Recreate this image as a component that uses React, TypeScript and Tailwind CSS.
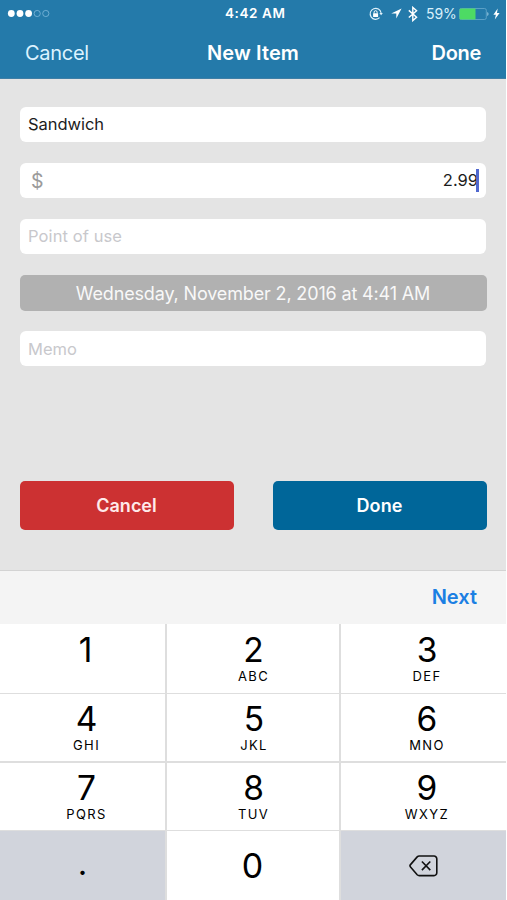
import { useState } from "react";
import clsx from "clsx";

const keys = [
  { digit: "1", letters: "", pad: "pt-[7px] pl-[6px]" },
  { digit: "2", letters: "ABC", pad: "pt-[7px] pl-[1px]" },
  { digit: "3", letters: "DEF", pad: "pt-[7px] pl-[7px]" },
  { digit: "4", letters: "GHI", pad: "pt-[6px] pl-[8px]" },
  { digit: "5", letters: "JKL", pad: "pt-[6px] pl-[2px]" },
  { digit: "6", letters: "MNO", pad: "pt-[6px] pl-[7px]" },
  { digit: "7", letters: "PQRS", pad: "pt-[6px] pl-[8px]" },
  { digit: "8", letters: "TUV", pad: "pt-[6px] pl-[1px]" },
  { digit: "9", letters: "WXYZ", pad: "pt-[6px] pl-[7px]" },
];

const SignalDots = () => (
  <svg width="44" height="10" viewBox="0 0 44 10" fill="none">
    <circle cx="4.3" cy="4.5" r="3.4" fill="#fff" />
    <circle cx="13" cy="4.5" r="3.4" fill="#fff" />
    <circle cx="21.6" cy="4.5" r="3.4" fill="#fff" />
    <circle cx="30.2" cy="4.5" r="3.1" stroke="#7fb9da" strokeWidth="0.8" />
    <circle cx="38.8" cy="4.5" r="3.1" stroke="#7fb9da" strokeWidth="0.8" />
  </svg>
);

const RotationLockIcon = () => (
  <svg width="14" height="14" viewBox="0 0 14 14" fill="none">
    <path d="M12.1 6A5.5 5.5 0 1 0 10.6 10.7" stroke="#dff1fb" strokeWidth="1.1" />
    <path d="M10.4 5.9h3.4l-1.7 2.4z" fill="#dff1fb" />
    <rect x="4.1" y="6.2" width="5" height="3.9" rx="0.4" fill="#fff" />
    <path d="M5.1 6.5V5.2a1.5 1.5 0 0 1 3 0v1.3" stroke="#fff" strokeWidth="1" />
  </svg>
);

const LocationIcon = () => (
  <svg width="11" height="11" viewBox="0 0 11 11">
    <path d="M10.6 0.5L0.2 5.5h5.1v5.1z" fill="#fff" />
  </svg>
);

const BluetoothIcon = () => (
  <svg width="10" height="16" viewBox="0 0 10 16" fill="none">
    <path d="M0.8 4.4L8.6 11.2 4.8 14.6V1.4L8.6 4.7 0.8 11.5" stroke="#fff" strokeWidth="1.4" />
  </svg>
);

const BatteryIcon = () => (
  <svg width="30" height="12" viewBox="0 0 30 12" fill="none">
    <rect x="0.5" y="0.5" width="26.8" height="11" rx="1.8" stroke="#62a5c9" strokeWidth="0.9" />
    <path d="M2 0.5H16.5V11.5H2A1.3 1.3 0 0 1 0.6 10V2A1.3 1.3 0 0 1 2 0.5Z" fill="#4ddb64" />
    <path d="M28.3 4q1.2 0.5 1.2 2t-1.2 2z" fill="#9ccbe2" />
  </svg>
);

const BoltIcon = () => (
  <svg width="7" height="12" viewBox="0 0 7 12">
    <path d="M4.7 0.6L0.4 6.7h2.5L1.8 11.4 6.6 5H4z" fill="#fff" />
  </svg>
);

const BackspaceIcon = () => (
  <svg width="29" height="22" viewBox="0 0 29 22" fill="none" stroke="#111" strokeWidth="1.6">
    <path
      d="M10.3 1H25a2.8 2.8 0 0 1 2.8 2.8V17.8A2.8 2.8 0 0 1 25 20.6H10.3a2.8 2.8 0 0 1-2.1-.9L1.5 12a1.8 1.8 0 0 1 0-2.4L8.2 1.9A2.8 2.8 0 0 1 10.3 1Z"
      strokeLinejoin="round"
    />
    <path d="M12.9 6.5l8.4 8.6M21.3 6.5l-8.4 8.6" />
  </svg>
);

const StatusBar = () => (
  <div className="flex h-[27px] items-center text-white">
    <div className="flex w-[225px] pl-[7px]">
      <SignalDots />
    </div>
    <span className="w-[62px] text-[13.5px] font-semibold tracking-[0.6px] whitespace-nowrap">4:42 AM</span>
    <div className="flex grow items-center pl-[82px]">
      <RotationLockIcon />
      <span className="ml-[8px]"><LocationIcon /></span>
      <span className="ml-[6px]"><BluetoothIcon /></span>
      <span className="ml-[8px] w-[33px] text-[14px] tracking-[-0.1px] text-[#d9f0fb]">59%</span>
      <BatteryIcon />
      <span className="ml-[4px]"><BoltIcon /></span>
    </div>
  </div>
);

const fieldClass =
  "h-[35px] w-full rounded-[6px] bg-white px-2 text-[16.5px] text-[#1c1c1c] outline-none placeholder:text-[#c8c8cc] placeholder:opacity-100";

const App = () => {
  const [name, setName] = useState("Sandwich");
  const [amount, setAmount] = useState("2.99");

  const press = (value: string) => setAmount(amount + value);

  return (
    <div className="h-[900px] w-[507px] overflow-hidden bg-white pr-px font-['Inter',sans-serif]">
      <div className="flex h-full flex-col bg-[#e4e4e4]">
        {/* Header */}
        <header className="h-[79px] border-b border-[#3f7fa6] bg-[#247aaa]">
          <StatusBar />
          <nav className="grid h-[51px] grid-cols-3 items-center px-[25px] text-[20px] text-white">
            <button className="text-left tracking-[-0.3px] text-[#dcf3ff]">Cancel</button>
            <h1 className="text-center font-semibold tracking-[0.1px]">New Item</h1>
            <button className="text-right font-semibold tracking-[-0.3px]">Done</button>
          </nav>
        </header>

        {/* Form */}
        <main className="flex h-[491px] flex-col px-5 pt-7">
          <input
            className={clsx(fieldClass, "pb-[2px] tracking-[-0.05px]")}
            value={name}
            onChange={(e) => setName(e.target.value)}
          />
          <div className="mt-[21px] flex h-[35px] items-center rounded-[6px] bg-white pr-[7px] pl-[11px]">
            <span className="grow pt-[2px] text-[19.5px] text-[#9b9b9b]">$</span>
            <span className="text-[16.5px] text-[#1c1c1c]">{amount}</span>
            <span className="-ml-[2px] h-[23px] w-[3px] bg-[#5068cf]" />
          </div>
          <input className={clsx(fieldClass, "mt-[21px] pb-[1px] tracking-[0.1px]")} placeholder="Point of use" />
          <button className="-mx-[0.5px] mt-[21px] h-[36px] rounded-[5px] bg-[#b1b1b1] pt-[1px] text-[18px] tracking-[-0.15px] whitespace-nowrap text-[#f8f8f8]">
            Wednesday, November 2, 2016 at 4:41 AM
          </button>
          <input className={clsx(fieldClass, "mt-[20px]")} placeholder="Memo" />

          <div className="-mx-[0.5px] mt-[115px] flex justify-between text-[18px] font-semibold text-white">
            <button className="h-[49px] w-[214px] rounded-[5px] bg-[#cc3132] text-[#ffeaea]">Cancel</button>
            <button className="h-[49px] w-[214px] rounded-[5px] bg-[#006699] tracking-[0.1px]">Done</button>
          </div>
        </main>

        {/* Keyboard */}
        <section className="flex grow flex-col text-black">
          <div className="flex h-[54px] items-center justify-end border-t border-[#d3d3d3] bg-[#f4f4f4] pr-[29px]">
            <button className="text-[20px] font-semibold text-[#1b7fe3]">Next</button>
          </div>
          <div className="grid grow grid-cols-[165px_172px_165px] grid-rows-[69px_67px_67px_69px] gap-x-[2px] gap-y-[1.5px] bg-[#dedede]">
            {keys.map((key) => (
              <button
                key={key.digit}
                className={clsx("flex flex-col items-center justify-start bg-white", key.pad)}
                onClick={() => press(key.digit)}
              >
                <span className="text-[33.5px] leading-[38px]">{key.digit}</span>
                <span className="text-[13px] leading-[15px] tracking-[1.4px]">{key.letters}</span>
              </button>
            ))}
            <button className="bg-[#d1d4dc] pb-[4px] text-[33px]" onClick={() => press(".")}>.</button>
            <button className="bg-white pr-[1px] text-[34px]" onClick={() => press("0")}>0</button>
            <button
              className="flex items-center justify-center bg-[#d1d4dc]"
              onClick={() => setAmount(amount.slice(0, -1))}
            >
              <BackspaceIcon />
            </button>
          </div>
        </section>
      </div>
    </div>
  );
};

export default App;
